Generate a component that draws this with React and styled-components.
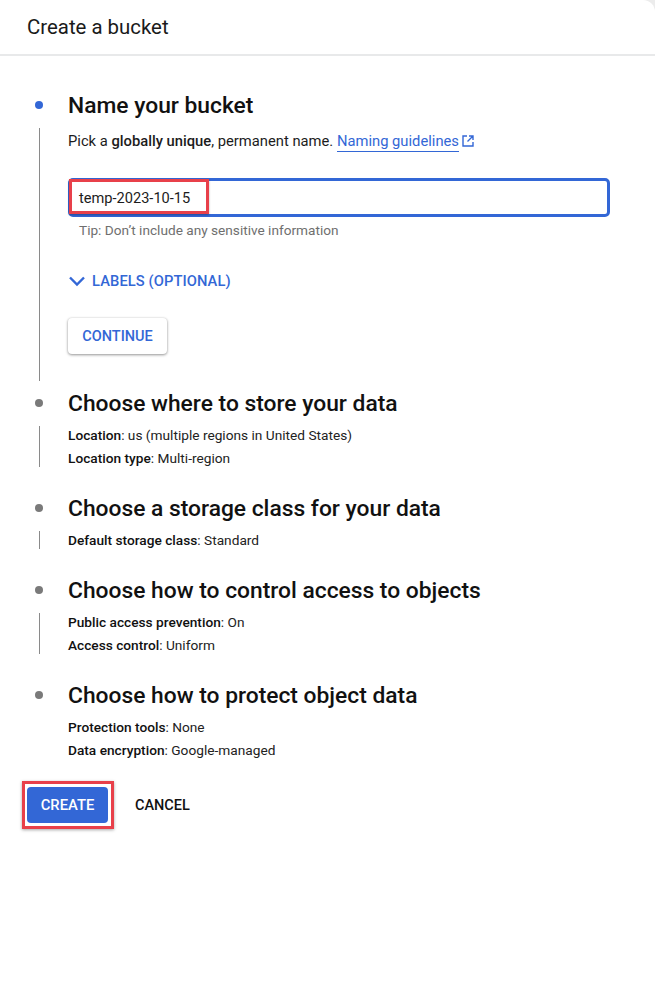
import styled, { createGlobalStyle } from "styled-components";

const GlobalStyle = createGlobalStyle`
  html, body {
    margin: 0;
    background: #ececec;
    font-family: Roboto, "Liberation Sans", sans-serif;
    color: #111;
  }
  * { box-sizing: border-box; }
`;

const Page = styled.div`
  width: 655px;
  height: 999px;
  overflow: hidden;
  background: #fff;
  border-top-right-radius: 12px;
`;

const Header = styled.header`
  height: 56px;
  padding-left: 27px;
  display: flex;
  align-items: center;
  border-bottom: 2px solid #e8e9ea;
  font-size: 20.4px;
  color: #1a1a1a;
  padding-bottom: 1px;
`;

const Steps = styled.div`
  padding-top: 26px;
`;

const Step = styled.section`
  margin-bottom: ${(props) => (props.$tight ? "-1px" : "18px")};
`;

const StepHead = styled.div`
  height: 46px;
  display: flex;
  align-items: center;
`;

const Dot = styled.span`
  width: 8px;
  height: 8px;
  margin-left: 35px;
  margin-right: 25px;
  border-radius: 50%;
  background: ${(props) => (props.$active ? "#3367d6" : "#7a7a7a")};
`;

const StepTitle = styled.h2`
  margin: 0;
  font-size: 22.8px;
  font-weight: 500;
  color: #111;
`;

const StepBody = styled.div`
  margin-left: 39px;
  padding-left: 28px;
  border-left: ${(props) => (props.$last ? "1px solid transparent" : "1px solid #8a8a8a")};
  display: flex;
  flex-direction: column;
`;

const SummaryList = styled.div`
  display: flex;
  flex-direction: column;
  gap: 5px;
`;

const SummaryRow = styled.div`
  font-size: 13.7px;
  line-height: 18px;
  color: #222;
  b {
    font-weight: 500;
    color: #111;
  }
`;

const Intro = styled.p`
  margin: 4px 0 0;
  font-size: 14.75px;
  line-height: 18px;
  color: #1c1c1c;
  b {
    font-weight: 500;
  }
`;

const GuideLink = styled.a`
  color: #3367d6;
  border-bottom: 1px solid #3367d6;
  padding-bottom: 1px;
`;

const ExternalIcon = styled.svg`
  width: 14px;
  height: 14px;
  margin-left: 2px;
  vertical-align: -2px;
`;

const Field = styled.div`
  position: relative;
  width: 542px;
  height: 39px;
  margin-top: 28px;
  border: 3px solid #3367d6;
  border-radius: 5px;
  display: flex;
  align-items: center;
  padding-left: 8px;
  font-size: 14.6px;
  color: #1c1c1c;
`;

const FieldHighlight = styled.span`
  position: absolute;
  left: -2px;
  top: -2px;
  width: 140px;
  height: 35px;
  border: 3px solid #e8404a;
  box-shadow: 0 1px 2px rgba(0, 0, 0, 0.3);
`;

const Tip = styled.div`
  margin: 4px 0 0 11px;
  font-size: 13.65px;
  line-height: 18px;
  color: #6f6f6f;
`;

const LabelsToggle = styled.div`
  margin-top: 33px;
  display: flex;
  align-items: center;
  gap: 6px;
  font-size: 14.7px;
  line-height: 18px;
  font-weight: 500;
  color: #3367d6;
  letter-spacing: 0.1px;
`;

const ChevronIcon = styled.svg`
  width: 18px;
  height: 12px;
`;

const ContinueButton = styled.button`
  align-self: flex-start;
  width: 99px;
  height: 36px;
  margin: 28px 0 27px;
  border: 0;
  border-radius: 4px;
  background: #fff;
  box-shadow: 0 1px 3px rgba(0, 0, 0, 0.4), 0 0 2px rgba(0, 0, 0, 0.1);
  font: 500 14.5px Roboto, sans-serif;
  color: #3367d6;
`;

const Actions = styled.div`
  display: flex;
  align-items: center;
  margin: 22px 0 0 22px;
`;

const CreateFrame = styled.div`
  padding: 3px 3px 3px 2px;
  border: 3px solid #e8404a;
  box-shadow: 0 1px 3px rgba(0, 0, 0, 0.35);
`;

const CreateButton = styled.button`
  display: block;
  width: 81px;
  height: 36px;
  border: 0;
  border-radius: 4px;
  background: #3367d6;
  color: #fff;
  font: 500 14.8px Roboto, sans-serif;
`;

const CancelButton = styled.button`
  margin-left: 21px;
  border: 0;
  padding: 0;
  background: none;
  color: #111;
  font: 500 14.5px Roboto, sans-serif;
`;

const summaries = [
  {
    title: "Choose where to store your data",
    rows: [
      ["Location", "us (multiple regions in United States)"],
      ["Location type", "Multi-region"],
    ],
  },
  {
    title: "Choose a storage class for your data",
    rows: [["Default storage class", "Standard"]],
  },
  {
    title: "Choose how to control access to objects",
    rows: [
      ["Public access prevention", "On"],
      ["Access control", "Uniform"],
    ],
  },
  {
    title: "Choose how to protect object data",
    last: true,
    rows: [
      ["Protection tools", "None"],
      ["Data encryption", "Google-managed"],
    ],
  },
];

export default function App() {
  return (
    <Page>
      <GlobalStyle />
      <Header>Create a bucket</Header>
      <Steps>
        <Step $tight>
          <StepHead>
            <Dot $active />
            <StepTitle>Name your bucket</StepTitle>
          </StepHead>
          <StepBody>
            <Intro>
              Pick a <b>globally unique</b>, permanent name.{" "}
              <GuideLink>Naming guidelines</GuideLink>
              <ExternalIcon viewBox="0 0 14 14" fill="none" stroke="#3367d6" strokeWidth="1.4">
                <path d="M6 2H2v10h10V8M8 2h4v4M12 2L6.5 7.5" />
              </ExternalIcon>
            </Intro>
            <Field>
              temp-2023-10-15
              <FieldHighlight />
            </Field>
            <Tip>Tip: Don’t include any sensitive information</Tip>
            <LabelsToggle>
              <ChevronIcon viewBox="0 0 18 12" fill="none" stroke="#3367d6" strokeWidth="2.4">
                <path d="M2 2.5l7 7 7-7" />
              </ChevronIcon>
              LABELS (OPTIONAL)
            </LabelsToggle>
            <ContinueButton>CONTINUE</ContinueButton>
          </StepBody>
        </Step>
        {summaries.map((step) => (
          <Step key={step.title}>
            <StepHead>
              <Dot />
              <StepTitle>{step.title}</StepTitle>
            </StepHead>
            <StepBody $last={step.last}>
              <SummaryList>
                {step.rows.map(([label, value]) => (
                  <SummaryRow key={label}>
                    <b>{label}</b>: {value}
                  </SummaryRow>
                ))}
              </SummaryList>
            </StepBody>
          </Step>
        ))}
      </Steps>
      <Actions>
        <CreateFrame>
          <CreateButton>CREATE</CreateButton>
        </CreateFrame>
        <CancelButton>CANCEL</CancelButton>
      </Actions>
    </Page>
  );
}
